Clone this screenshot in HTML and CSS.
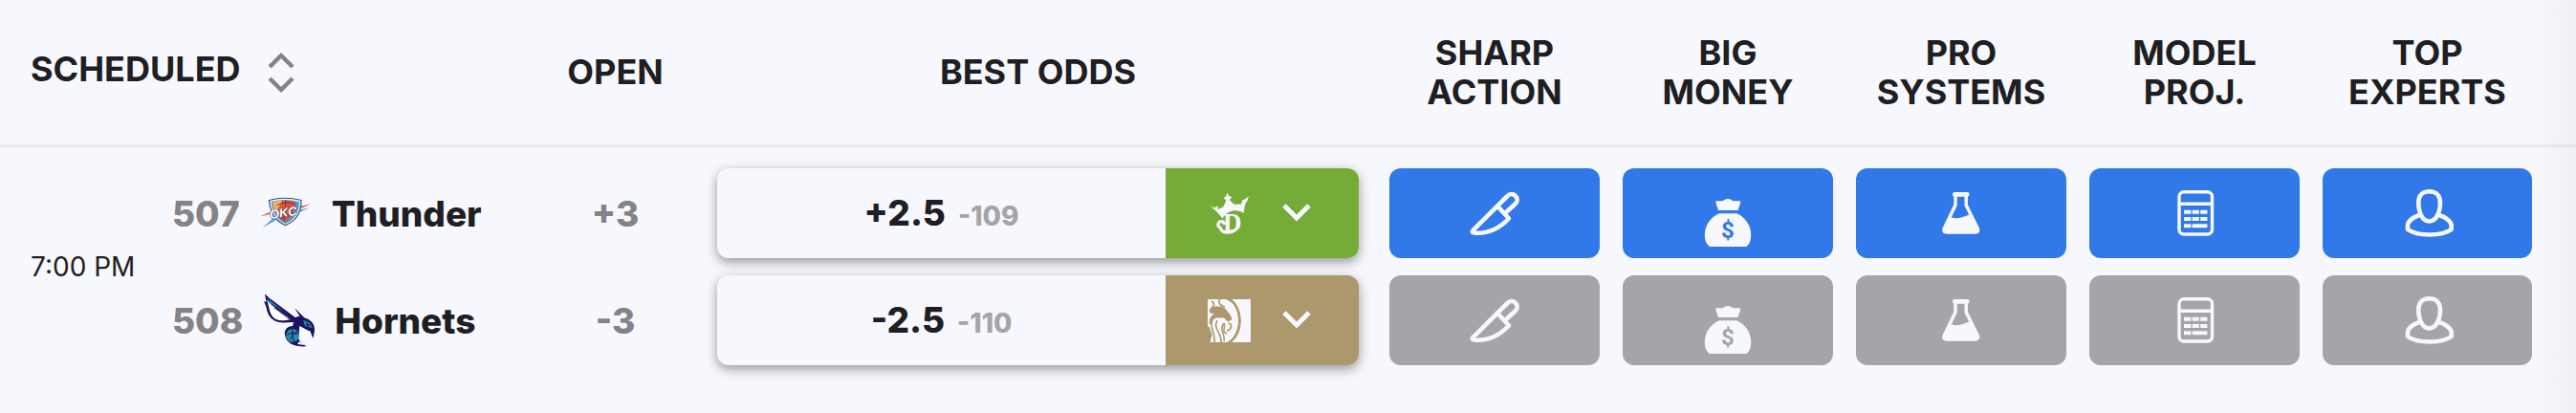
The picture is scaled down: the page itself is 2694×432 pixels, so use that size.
FILE: index.html
```html
<!DOCTYPE html>
<html lang="en">
<head>
  <meta charset="UTF-8">
  <title>NBA Odds</title>
  <link rel="stylesheet" href="styles.css">
</head>
<body>

  <svg class="sprite" aria-hidden="true">
    <symbol id="sort" viewBox="0 0 28 48">
      <path d="M2 18 L14 6 L26 18 M2 30 L14 42 L26 30" fill="none" stroke="currentColor" stroke-width="4.4"/>
    </symbol>
    <symbol id="chevron" viewBox="0 0 42 42">
      <path d="M8 13 L21 26 L34 13" fill="none" stroke="currentColor" stroke-width="5"/>
    </symbol>
    <symbol id="knife" viewBox="0 0 56 56">
      <path d="M31.5 21 L43 33.5 C34 43 22 50 6.5 48.5 C4.5 48.3 4.3 47 5.5 45.8 L41.5 10 A5.6 5.6 0 0 1 50 18 L38.5 28.5" fill="none" stroke="currentColor" stroke-width="4.6" stroke-linejoin="round"/>
    </symbol>
    <symbol id="money" viewBox="0 0 56 76">
      <path d="M16.5 25.3 H22.5 Q28 20.5 33.5 25.3 H40 Q41.5 25.3 41.2 26.7 L38.6 35 H18 L15.3 26.7 Q15 25.3 16.5 25.3 Z" fill="currentColor"/>
      <path d="M18.8 38.3 H37.5 C46 42 52.2 51 52.2 60.5 C52.2 66 51 70 47.5 73 H9 C5 70 3.8 66 3.8 60.5 C3.8 51 10 42 18.8 38.3 Z" fill="currentColor"/>
      <text class="dollar" x="28" y="64" text-anchor="middle">$</text>
    </symbol>
    <symbol id="flask" viewBox="0 0 56 56">
      <rect x="19" y="6" width="17.5" height="4.8" rx="2" fill="currentColor"/>
      <path d="M22 10 V19.5 L10.5 43.5 Q8.5 48 13 48 H42.5 Q47 48 45 43.5 L33.2 19.5 V10" fill="none" stroke="currentColor" stroke-width="3.5"/>
      <path d="M17.5 32.3 C24 34.5 29 32.5 37.5 29 L46 45 L43 48.5 H12 L9.5 45 Z" fill="currentColor"/>
    </symbol>
    <symbol id="calc" viewBox="0 0 56 56">
      <rect x="12" y="5.7" width="34.5" height="44.3" rx="5" fill="none" stroke="currentColor" stroke-width="3.4"/>
      <path d="M12 18.2 H46" stroke="currentColor" stroke-width="3.6"/>
      <path d="M17 26.7 H24.4 M25.6 26.7 H32.8 M34.2 26.7 H41.4 M17 34 H24.4 M25.6 34 H32.8 M34.2 34 H41.4 M17 41.2 H24.4 M25.6 41.2 H41.4" stroke="currentColor" stroke-width="4"/>
    </symbol>
    <symbol id="expert" viewBox="0 0 56 56">
      <path d="M29.5 5.3 C22.5 5.3 18.3 9.5 18.3 17 C18.3 27.5 22.5 36.5 29.5 36.5 C36.5 36.5 41 27.5 41 17 C41 9.5 36.5 5.3 29.5 5.3 Z" fill="none" stroke="currentColor" stroke-width="4.6"/>
      <path d="M19.5 30 C12 32 7 37 7 40.5 V45 C17 52.3 42.5 52.3 52.7 45 V40.5 C52.5 37 47 32 39.8 30" fill="none" stroke="currentColor" stroke-width="4.6" stroke-linejoin="round"/>
    </symbol>
    <symbol id="draftkings" viewBox="0 0 45 45">
      <path d="M2.3 14.7 L7 16.3 L10.5 14.5 L10.8 18 L16.5 15.3 L19.3 8.5 L16.5 6 L19.2 4.5 L20.3 .5 L22 4 L25.5 5 L22.8 8 L27.5 12.8 L35.3 12.5 L36 8.5 L39.5 7 L43 4 L41 10 L39.5 11.5 L37.5 22 C32 17.5 21 18 15.5 27.5 C12 24 9 18.5 2.3 14.7 Z" fill="currentColor"/>
      <text class="dk-letter" x="16" y="40.5">D</text>
      <path d="M17.5 34 A3.3 3.3 0 1 0 13 37 C15 43.5 24 43.5 29 39.5" fill="none" stroke="currentColor" stroke-width="3.2"/>
    </symbol>
    <symbol id="betmgm" viewBox="0 0 45 45">
      <path d="M0 0 H45 V45 H0 Z" fill="currentColor"/>
      <g class="lion">
        <path d="M20 0 C36 6 37 36 21 45 H24.5 C38 35 37 9 24.5 0 Z"/>
        <path d="M2 11 C6 7 13 7 18 10 L23 16 L25 21 L21 23 L17 19 L9 19 C6 20 4 22 2 26 C2 20 4 17 8 15 L3 14 Z"/>
        <path d="M13 0 C10 3 13 7 18 8 M4 2 C8 4 7 8 3 10 M5 22 C1 30 8 33 7 45 M10 22 C5 31 15 35 14 45 M17 25 C11 33 19 36 17 44 M17 25 C19 31 14 34 20 36 M22 25 C26 26 25 32 20 33" fill="none" stroke-width="1.6"/>
        <path d="M1 29 L4 37 L2 45 L0 45 V29 Z"/>
      </g>
    </symbol>
    <symbol id="thunder" viewBox="0 0 56 56">
      <path d="M.7 31.5 L14 25.5 V28.5 Z M42 21 L54 18.3 L42 24 Z" fill="#e8644a"/>
      <path d="M3.5 43 L15 33 L18 35 Z M41 25 L53 22.3 L40 28 Z" fill="#4e9bd8"/>
      <path d="M10.5 14.5 Q26.5 10 44 14.5 C44 29 38 36 27.5 40.7 C18 36 12 30 10.5 14.5 Z" fill="#fff" stroke="#244a7c" stroke-width="1.2"/>
      <path d="M12.5 16 Q26.5 12 42 16 C42 27 37 35 27.5 39 C19 35 14 28 12.5 16 Z" fill="#4c9ad6"/>
      <path d="M14 16.5 Q26.5 13 38 16.5 C38 27 34 33 27.5 36.5 C20 33 16 28 14 16.5 Z" fill="#e6512d"/>
      <path d="M14 17 Q19 14.5 24 15 L18 27 Q15 23 14 17 Z" fill="#f6b45c"/>
      <path d="M28 14 L26 37 M18 20 Q28 14 38 19 M22 34 Q30 29 36 29" fill="none" stroke="#8b3140" stroke-width="1"/>
      <text class="okc" x="25" y="32" text-anchor="middle" transform="rotate(-8 25 27)">OKC</text>
    </symbol>
    <symbol id="hornets" viewBox="0 0 56 56">
      <path d="M3 .5 L8 5 L36 26 L33 30 C25 30 17 32 11 27 C6 23 5 17 4.5 14.5 L2 8 L4.5 9 Z" fill="#1d1160"/>
      <path d="M6 5 L32 26 C25 20 15 13 7 10 Z" fill="#16849b"/>
      <path d="M4.5 6 C9 13 19 18 30 27 C21 29 15 29 11 24 C7 19 8 13 4.5 6 Z" fill="#fff"/>
      <path d="M13 15 L32 29" stroke="#1d1160" stroke-width="1"/>
      <path d="M34 15 L46 27 L42 28 Z" fill="#1d1160"/>
      <path d="M34 26 C38 22 43 25 46 26 C52 28 55 32 55 39 L53.3 47 L50.5 39.5 C46 38 42 35 39 34 C39 39 39 41 38 47 C40 51 43 53 46.5 55.3 C38 56 29 54 25.5 48 C21 39 26 34 32 34 Z" fill="#1d1160"/>
      <circle cx="32" cy="44" r="7" fill="#258ba3"/>
      <path d="M43 28 Q51 29 52.5 36 L45 34 Z" fill="#258ba3"/>
      <path d="M26 43 Q32 40 38 42 M32 37 Q30 44 34 51 M29 48 L37 39" fill="none" stroke="#1d1160" stroke-width="1"/>
      <path d="M46 30 L51 34 L47 34 Z" fill="#1d1160"/>
      <path d="M39 50 L45 54 L37 53 Z" fill="#fff"/>
    </symbol>
  </svg>

  <table class="odds-table">
    <colgroup>
      <col class="col-time">
      <col class="col-team">
      <col class="col-open">
      <col>
      <col class="col-signal" span="4">
      <col class="col-last">
    </colgroup>
    <thead>
      <tr>
        <th colspan="2" class="scheduled"><button class="sort-btn">SCHEDULED<svg class="sort-icon"><use href="#sort"/></svg></button></th>
        <th>OPEN</th>
        <th>BEST ODDS</th>
        <th>SHARP<br>ACTION</th>
        <th>BIG<br>MONEY</th>
        <th>PRO<br>SYSTEMS</th>
        <th>MODEL<br>PROJ.</th>
        <th>TOP<br>EXPERTS</th>
      </tr>
    </thead>
    <tbody>
      <tr class="away">
        <td rowspan="2" class="time">7:00 PM</td>
        <td>
          <div class="team">
            <span class="rotation">507</span>
            <svg class="team-logo"><use href="#thunder"/></svg>
            <span>Thunder</span>
          </div>
        </td>
        <td class="open">+3</td>
        <td class="best">
          <div class="odds">
            <div class="line">+2.5 <span class="juice">-109</span></div>
            <button class="book draftkings" aria-label="DraftKings">
              <svg class="book-logo"><use href="#draftkings"/></svg>
              <svg class="chevron"><use href="#chevron"/></svg>
            </button>
          </div>
        </td>
        <td><button class="signal active" aria-label="Sharp action"><svg class="icon"><use href="#knife"/></svg></button></td>
        <td><button class="signal active" aria-label="Big money"><svg class="icon tall"><use href="#money"/></svg></button></td>
        <td><button class="signal active" aria-label="Pro systems"><svg class="icon"><use href="#flask"/></svg></button></td>
        <td><button class="signal active" aria-label="Model projection"><svg class="icon"><use href="#calc"/></svg></button></td>
        <td><button class="signal active" aria-label="Top experts"><svg class="icon"><use href="#expert"/></svg></button></td>
      </tr>
      <tr class="home">
        <td>
          <div class="team">
            <span class="rotation">508</span>
            <svg class="team-logo"><use href="#hornets"/></svg>
            <span>Hornets</span>
          </div>
        </td>
        <td class="open">-3</td>
        <td class="best">
          <div class="odds">
            <div class="line">-2.5 <span class="juice">-110</span></div>
            <button class="book betmgm" aria-label="BetMGM">
              <svg class="book-logo"><use href="#betmgm"/></svg>
              <svg class="chevron"><use href="#chevron"/></svg>
            </button>
          </div>
        </td>
        <td><button class="signal" aria-label="Sharp action"><svg class="icon"><use href="#knife"/></svg></button></td>
        <td><button class="signal" aria-label="Big money"><svg class="icon tall"><use href="#money"/></svg></button></td>
        <td><button class="signal" aria-label="Pro systems"><svg class="icon"><use href="#flask"/></svg></button></td>
        <td><button class="signal" aria-label="Model projection"><svg class="icon"><use href="#calc"/></svg></button></td>
        <td><button class="signal" aria-label="Top experts"><svg class="icon"><use href="#expert"/></svg></button></td>
      </tr>
    </tbody>
  </table>

</body>
</html>
```

FILE: styles.css
```css
body {
  margin: 0;
  background-color: #f7f8fd;
  color: #1e1e23;
  font-family: Inter, sans-serif;
  font-size: 36px;
}

/* soft edge where the table scrolls off to the right */
body::after {
  content: "";
  position: fixed;
  top: 0;
  right: 0;
  bottom: 0;
  width: 40px;
  background: linear-gradient(to right, rgba(30, 30, 35, 0), rgba(30, 30, 35, 0.04));
  pointer-events: none;
}

button {
  border: none;
  padding: 0;
  font: inherit;
  color: inherit;
  cursor: pointer;
}

.sprite {
  display: none;
}

.odds-table {
  width: 100%;
  table-layout: fixed;
  border-collapse: separate;
  border-spacing: 0;
}

.col-time {
  width: 180px;
}

.col-team {
  width: 377px;
}

.col-open {
  width: 173px;
}

.col-signal {
  width: 244px;
}

.col-last {
  width: 277px;
}

th {
  height: 151px;
  padding: 0 12px;
  border-bottom: 3px solid #ebecf1;
  font-weight: 700;
  line-height: 41px;
}

td {
  padding: 9px 12px;
}

th:last-child,
td:last-child {
  padding-right: 46px;
}

.away td {
  padding-top: 22px;
}

.home td {
  padding-bottom: 22px;
}

th.scheduled {
  padding-left: 32px;
  text-align: left;
}

.sort-btn {
  display: flex;
  align-items: flex-start;
  gap: 28px;
  background: none;
}

.sort-icon {
  width: 28px;
  height: 48px;
  color: #848388;
}

.away td.time {
  padding: 0 0 0 32px;
  font-size: 28px;
}

.team {
  display: flex;
  align-items: center;
  gap: 20px;
  font-size: 37px;
  font-weight: 800;
  margin-left: -12px;
}

.rotation,
.open {
  color: #848388;
}

.team-logo {
  width: 56px;
  height: 56px;
}

.open {
  font-size: 37px;
  font-weight: 800;
  text-align: center;
}

td.best {
  padding-left: 20px;
  padding-right: 20px;
}

.odds {
  display: flex;
  height: 94px;
  border-radius: 12px;
  overflow: hidden;
  box-shadow: 0 4px 12px rgba(30, 30, 35, 0.45);
  background-color: #f7f8fd;
}

.line {
  flex: 1;
  display: flex;
  align-items: baseline;
  justify-content: center;
  gap: 13px;
  line-height: 94px;
  font-size: 37px;
  font-weight: 800;
}

.juice {
  font-size: 28px;
  color: #a5a4a9;
}

.book {
  width: 202px;
  display: flex;
  align-items: center;
  justify-content: center;
  gap: 27px;
  color: #f7f8fd;
}

.draftkings {
  background-color: #74ac37;
}

.betmgm {
  background-color: #ac986c;
}

.book-logo {
  width: 45px;
  height: 45px;
}

.chevron {
  width: 42px;
  height: 42px;
}

.signal {
  --tile: #a5a4a9;
  display: flex;
  align-items: center;
  justify-content: center;
  width: 100%;
  height: 94px;
  border-radius: 12px;
  background-color: var(--tile);
  color: #f7f8fd;
}

.signal.active {
  --tile: #3179e8;
}

.icon {
  width: 56px;
  height: 56px;
}

.icon.tall {
  height: 76px;
}

.dollar {
  font-family: Roboto, sans-serif;
  font-size: 24px;
  font-weight: 700;
  fill: var(--tile);
}

.dk-letter {
  font-family: "Liberation Serif", serif;
  font-size: 27px;
  font-weight: 700;
  fill: currentColor;
}

.okc {
  font-family: "Liberation Sans", sans-serif;
  font-size: 13px;
  font-weight: 700;
  font-style: italic;
  fill: #fff;
  stroke: #244a7c;
  stroke-width: 1px;
  paint-order: stroke;
}

.lion {
  fill: #ac986c;
  stroke: #ac986c;
}
```
